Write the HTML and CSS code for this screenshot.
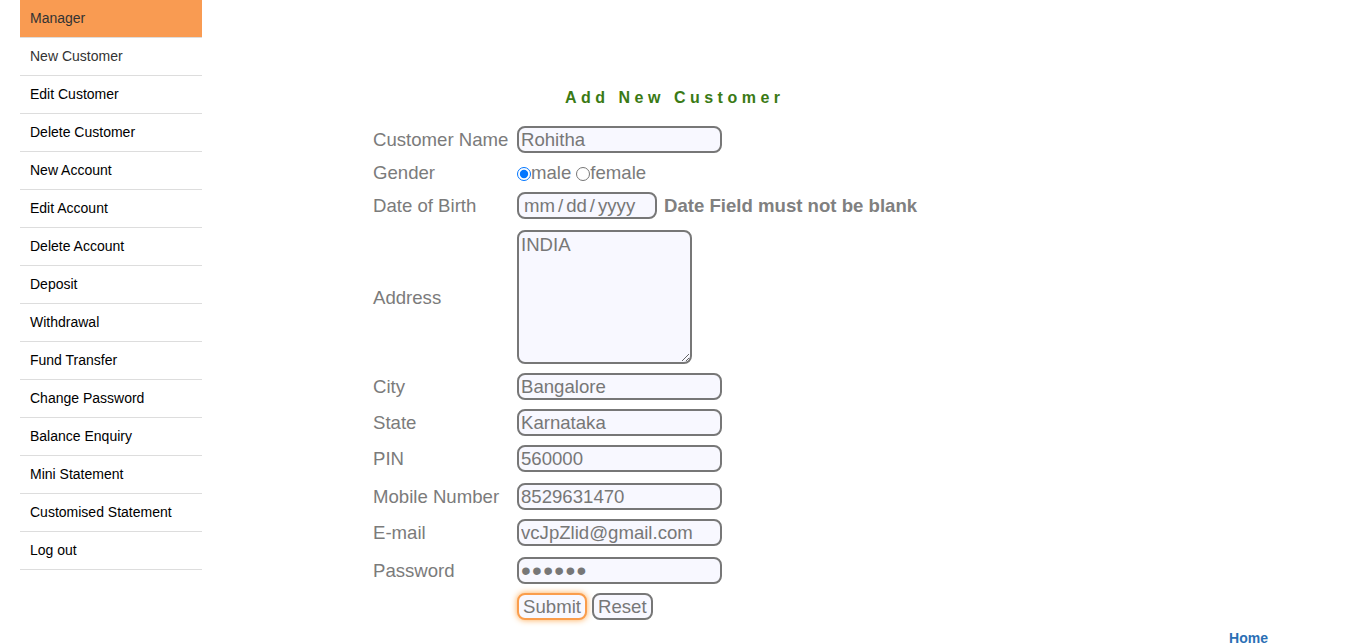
FILE: index.html
```html
<!DOCTYPE html>
<html>
<head>
<meta charset="utf-8">
<title>Guru99 Bank Add New Customer</title>
<link rel="stylesheet" href="styles.css">
</head>
<body>
<div class="page">
  <ul class="menu">
    <li class="menu-item active">Manager</li>
    <li class="menu-item soft">New Customer</li>
    <li class="menu-item">Edit Customer</li>
    <li class="menu-item">Delete Customer</li>
    <li class="menu-item">New Account</li>
    <li class="menu-item">Edit Account</li>
    <li class="menu-item">Delete Account</li>
    <li class="menu-item">Deposit</li>
    <li class="menu-item">Withdrawal</li>
    <li class="menu-item">Fund Transfer</li>
    <li class="menu-item">Change Password</li>
    <li class="menu-item">Balance Enquiry</li>
    <li class="menu-item">Mini Statement</li>
    <li class="menu-item">Customised Statement</li>
    <li class="menu-item">Log out</li>
  </ul>
  <div class="main">
    <div class="title">Add New Customer</div>
    <form class="form">
      <label class="lbl">Customer Name</label>
      <div class="fld"><input class="box" type="text" value="Rohitha"></div>

      <label class="lbl">Gender</label>
      <div class="fld gender">
        <input class="radio" type="radio" name="g" checked><span>male</span>
        <input class="radio r2" type="radio" name="g"><span>female</span>
      </div>

      <label class="lbl">Date of Birth</label>
      <div class="fld">
        <div class="box date">mm<span class="sl">/</span>dd<span class="sl">/</span>yyyy</div>
        <span class="err">Date Field must not be blank</span>
      </div>

      <label class="lbl addr">Address</label>
      <div class="fld addr"><textarea class="area">INDIA</textarea></div>

      <label class="lbl">City</label>
      <div class="fld"><input class="box" type="text" value="Bangalore"></div>

      <label class="lbl">State</label>
      <div class="fld"><input class="box" type="text" value="Karnataka"></div>

      <label class="lbl">PIN</label>
      <div class="fld"><input class="box" type="text" value="560000"></div>

      <label class="lbl pushed">Mobile Number</label>
      <div class="fld pushed"><input class="box" type="text" value="8529631470"></div>

      <label class="lbl">E-mail</label>
      <div class="fld"><input class="box" type="text" value="vcJpZlid@gmail.com"></div>

      <label class="lbl pushed">Password</label>
      <div class="fld pushed"><input class="box pw" type="password" value="123456"></div>

      <div class="lbl"></div>
      <div class="fld btns">
        <button class="btn focus" type="button">Submit</button>
        <button class="btn" type="button">Reset</button>
      </div>
    </form>
    <div class="footer"><a class="home" href="#">Home</a></div>
  </div>
</div>
</body>
</html>
```

FILE: styles.css
```css
html, body {
  margin: 0;
  padding: 0;
  background: #ffffff;
  font-family: "Liberation Sans", Arial, sans-serif;
  overflow: hidden;
}
.page {
  display: flex;
  align-items: flex-start;
}
.menu {
  list-style: none;
  margin: 0 0 0 20px;
  padding: 0;
  width: 182px;
  flex: none;
}
.menu-item {
  height: 37px;
  line-height: 37px;
  padding-left: 10px;
  font-size: 14px;
  color: #000;
  border-bottom: 1px solid #dddddd;
}
.menu-item.active {
  background: #f99b52;
  color: #333;
}
.menu-item.soft {
  color: #333;
}
.main {
  flex: 1;
  padding-left: 171px;
}
.title {
  margin-top: 89px;
  margin-left: 192px;
  font-size: 16px;
  font-weight: bold;
  letter-spacing: 4.5px;
  color: #3a7a15;
  line-height: 18px;
  height: 18px;
}
.form {
  margin-top: 19px;
  display: grid;
  grid-template-columns: 144px auto;
  row-gap: 9px;
  align-items: center;
}
.lbl {
  font-size: 18.6px;
  line-height: 21px;
  color: #7b7b7b;
}
.fld {
  display: flex;
  align-items: center;
}
.pushed {
  margin-top: 2px;
}
.addr {
  margin-top: 2px;
}
.box {
  box-sizing: border-box;
  width: 205px;
  height: 27px;
  border: 2px solid #777;
  border-radius: 8px;
  background: #f8f8ff;
  font-family: "Liberation Sans", Arial, sans-serif;
  font-size: 18.6px;
  color: #777;
  padding: 1px 2px 0;
  margin: 0;
  outline: none;
}
.pw {
  font-size: 28px;
  letter-spacing: 1.3px;
  padding: 0 2px;
}
.gender {
  height: 21px;
  line-height: 21px;
  font-size: 18.6px;
  color: #7b7b7b;
}
.radio {
  width: 14px;
  height: 14px;
  margin: 2px 0 0 0;
}
.r2 {
  margin-left: 5px;
}
.date {
  width: 140px;
  display: flex;
  align-items: center;
  padding-left: 5px;
}
.sl {
  margin: 0 3px;
}
.err {
  margin-left: 7px;
  font-size: 18.6px;
  font-weight: bold;
  color: #808080;
}
.area {
  box-sizing: border-box;
  width: 175px;
  height: 134px;
  border: 2px solid #777;
  border-radius: 8px;
  background: #f8f8ff;
  font-family: "Liberation Sans", Arial, sans-serif;
  font-size: 18.6px;
  color: #777;
  padding: 2px 2px;
  margin: 0;
  outline: none;
}
.btns {
  gap: 5px;
}
.btn {
  box-sizing: border-box;
  height: 27px;
  border: 2px solid #777;
  border-radius: 8px;
  background: #f8f8ff;
  font-family: "Liberation Sans", Arial, sans-serif;
  font-size: 18.6px;
  color: #777;
  padding: 1px 4px 0;
  margin: 0;
}
.btn.focus {
  width: 70px;
  border-color: #fa9d4c;
  box-shadow: 0 0 6px #ffa84d;
}
.footer {
  text-align: right;
  padding-right: 98px;
  margin-top: 9px;
}
.home {
  font-size: 14px;
  font-weight: bold;
  color: #2a6fb5;
  text-decoration: none;
}
```
